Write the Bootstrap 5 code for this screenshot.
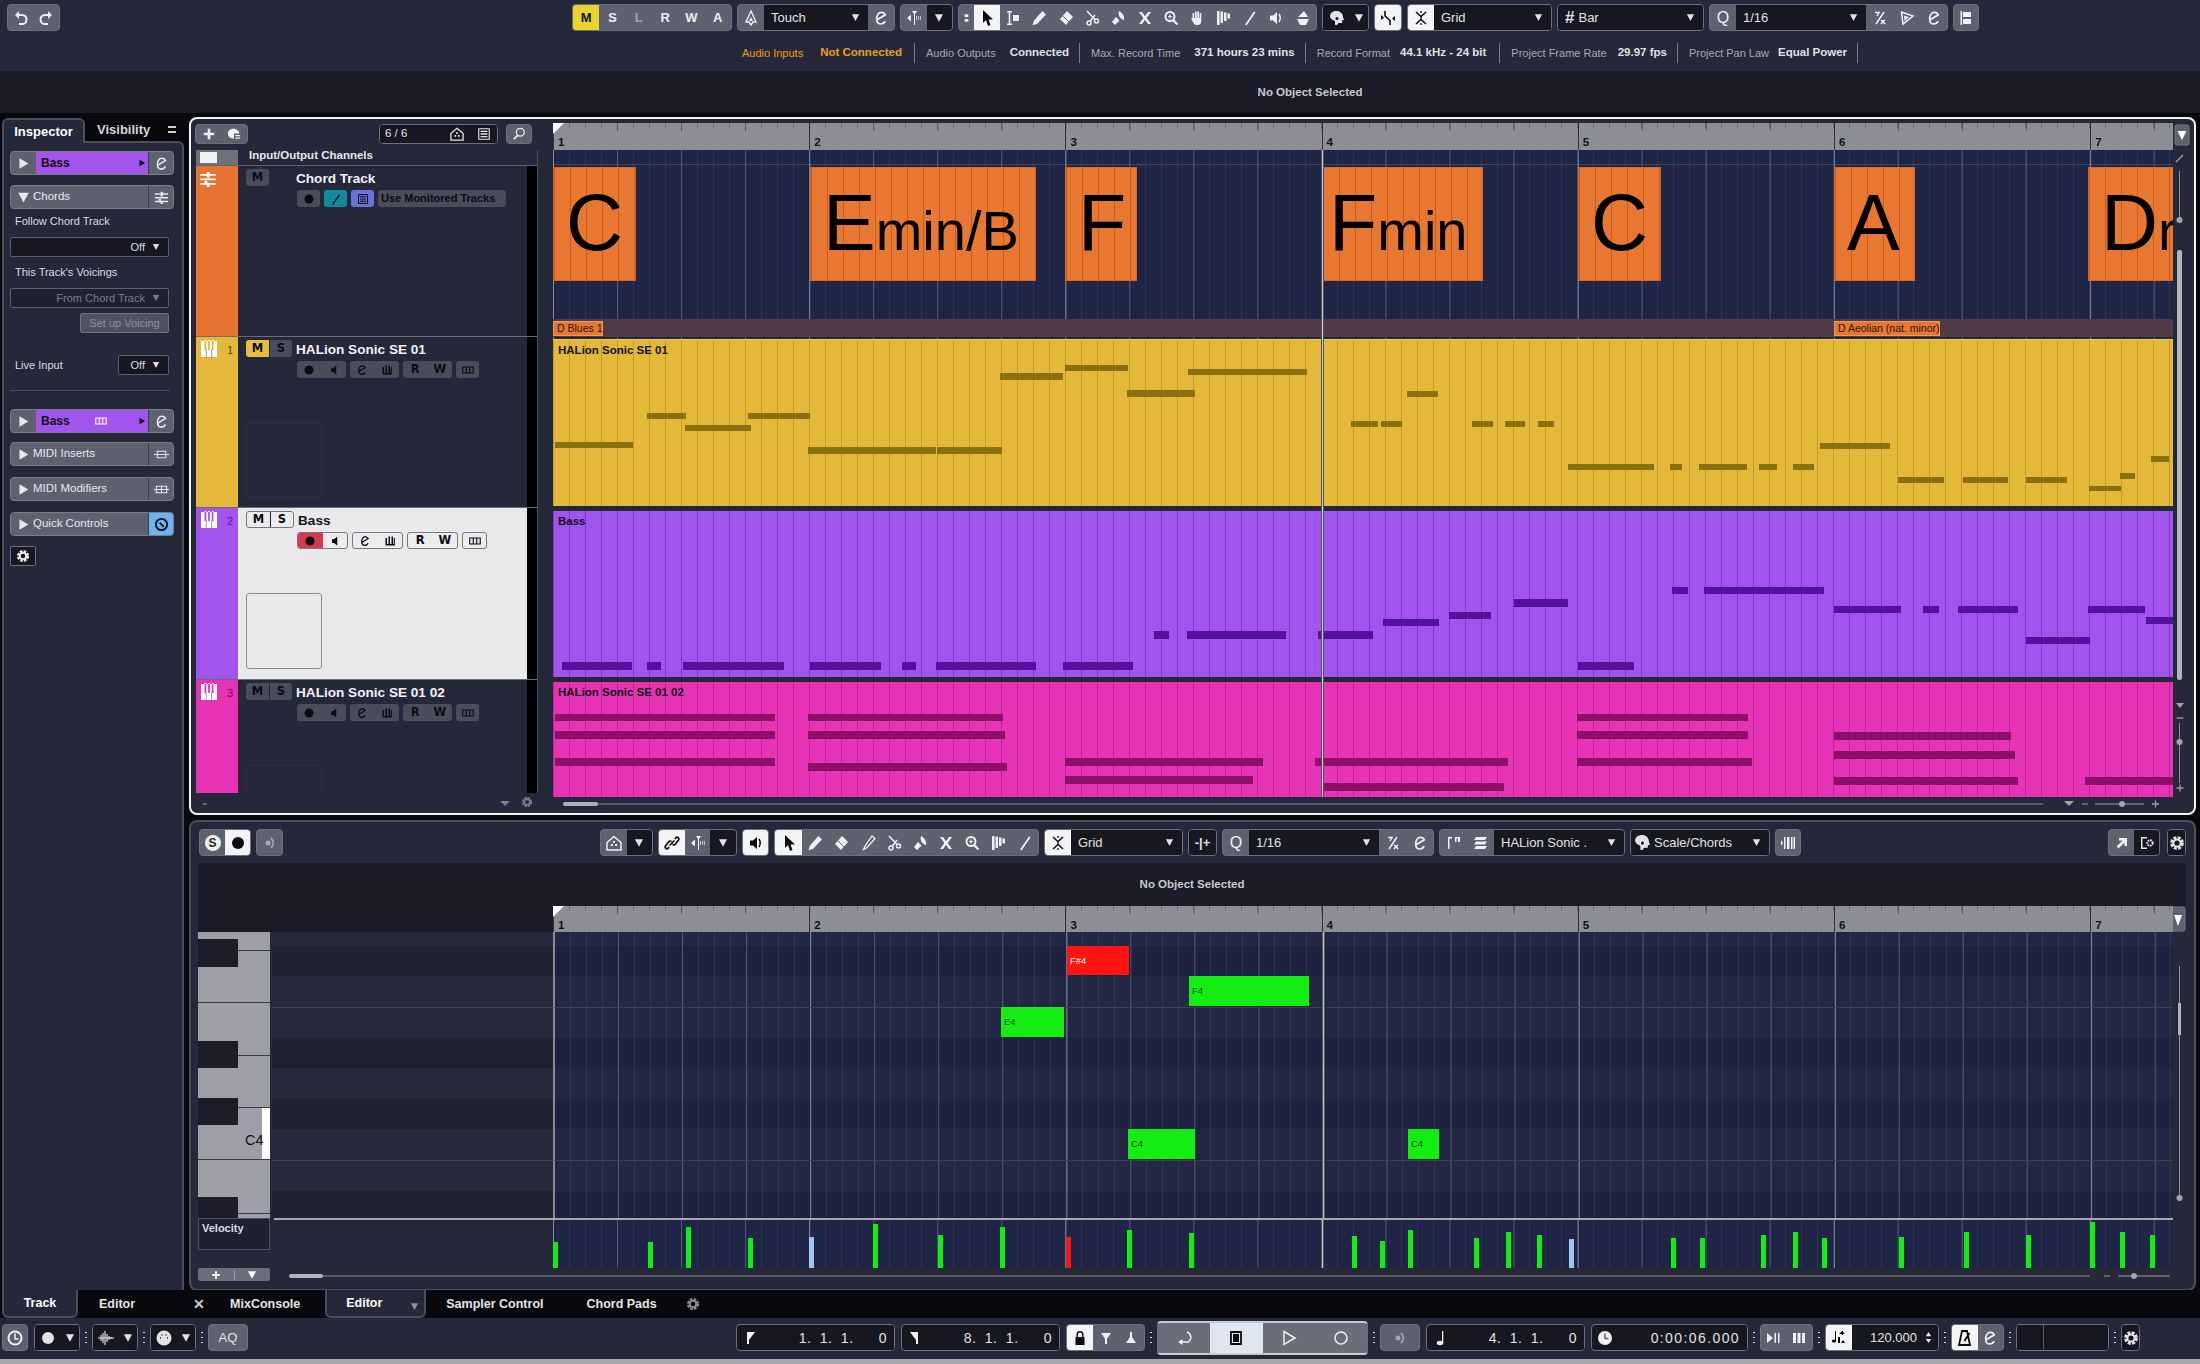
<!DOCTYPE html>
<html lang="en">
<head>
<meta charset="UTF-8">
<title>Cubase Project</title>
<link rel="stylesheet" href="https://cdn.jsdelivr.net/npm/bootstrap@5.3.0/dist/css/bootstrap.min.css">
<style>
:root { --panel:#252839; --dark:#16171f; --info:#1a1b27; --seg:#5e616e; --edge:#6d6f7b; --navy:#1f2645; }
html, body { margin:0; width:2200px; height:1364px; overflow:hidden; }
body { background:#08080d; color:#dcdce0; font-family:"Liberation Sans",Arial,sans-serif; font-size:12px; line-height:1; display:flex; flex-direction:column; }

/* widths of toolbar groups */
.wd19 { width:19px; } .wd26 { width:26px; } .wd27 { width:27px; } .wd28 { width:28px; } .wd29 { width:29px; } .wd40 { width:40px; } .wd46 { width:46px; } .wd47 { width:47px; }
.wd52 { width:52px; } .wd53 { width:53px; } .wd79 { width:79px; } .wd93 { width:93px; } .wd114 { width:114px; } .wd119 { width:119px; } .wd139 { width:139px; } .wd140 { width:140px; }
.wd145 { width:145px; } .wd147 { width:147px; } .wd157 { width:157px; } .wd158 { width:158px; } .wd159 { width:159px; } .wd160 { width:160px; } .wd186 { width:186px; } .wd211 { width:211px; }
.wd212 { width:212px; } .wd239 { width:239px; } .wd265 { width:265px; } .wd359 { width:359px; }
.w14 { width:15px; } .w18 { width:18px; } .w26 { width:26px; } .w27 { width:27px; }

/* toolbars */
.top-zone { height:71px; background:var(--panel); flex:none; }
.tbar { height:35px; padding:4px 0 0 7px; gap:5px; }
.sg { height:27px; border:1px solid var(--edge); border-radius:4px; overflow:hidden; display:flex; flex:none; background:var(--seg); color:#f1f1f4; }
.sg > span { display:flex; align-items:center; justify-content:center; flex:none; height:100%; }
.sg svg { width:16px; height:16px; }
.sg .fx { flex:1 1 0; min-width:0; }
.sg .sw { background:#f4f4f6; color:#0c0c10; }
.sg .sl { background:#dfe6f0; color:#0c0c10; }
.sg .sk { background:var(--dark); color:#e3e3e7; }
.sg .txt { justify-content:flex-start; padding-left:7px; font-size:13px; }
.sg .txt svg { width:9px; height:9px; margin-left:auto; margin-right:8px; }
.sg.blank { background:var(--dark); }
.sg .bold { font-weight:700; font-size:13px; }
.sg .dim { opacity:.45; }
.sg svg.tiny { width:10px; height:10px; }
.sg .bgy { background:#e8d62f; color:#111; }
.dimmed { color:#a5a6ad; }
.ms-tb { margin-left:507px; }
.hash { font-weight:700; font-size:17px; margin-right:4px; }
.sg .qq { font-size:16px; font-weight:400; }
.status { height:36px; padding-left:742px; display:flex; align-items:center; font-size:11px; color:#a9aab2; }
.status b { color:#e0e0e4; font-size:11.5px; margin-left:14px; }
.status i { display:block; width:1px; height:20px; background:#777a86; margin:0 11px 0 10px; }
.status .warn { color:#e9a01b; }
.status b.st-nc { margin-left:17px; }
.status i.st-s1 { margin-left:12px; }
.status b.st-fmt { margin-left:10px; }
.status i.st-s2 { margin-left:13px; }
.status b.st-fps { margin-left:11px; }
.status b.st-pan { margin-left:9px; }
.infobar { height:42px; background:var(--info); flex:none; display:flex; align-items:center; justify-content:center; padding:1px 0 0 420px; font-weight:700; font-size:11.5px; color:#c9c9cf; }
.work { height:1177px; flex:none; display:flex; padding-top:4px; }

/* inspector */
.insp { width:182px; margin-left:2px; margin-right:5px; flex:none; display:flex; flex-direction:column; }
.insp-tabs { height:24px; display:flex; align-items:center; font-size:13px; font-weight:700; flex:none; }
.insp-on { width:83px; height:25px; margin-bottom:-2px; position:relative; z-index:1; background:var(--panel); border:2px solid #4b4e5b; border-bottom:0; border-radius:6px 6px 0 0; display:flex; align-items:center; justify-content:center; color:#fff; }
.insp-off { margin-left:12px; color:#d5d5da; font-weight:700; }
.insp-menu { margin-left:auto; margin-right:8px; width:8px; height:7px; border-top:2px solid #ccc; border-bottom:2px solid #ccc; }
.insp-body { flex:1; background:var(--panel); border:2px solid #4b4e5b; border-bottom:0; border-radius:0 6px 0 0; padding:0 8px 0 6px; font-size:11px; }
.irow { height:24px; margin-top:10px; border:1px solid #7a7c88; border-radius:4px; background:var(--seg); display:flex; align-items:center; overflow:hidden; font-size:11.5px; color:#e8e8ec; }
.irow.first { margin-top:8px; }
.irow svg { width:13px; height:13px; flex:none; }
.irow .tr { width:25px; display:flex; justify-content:center; flex:none; }
.irow .pu { flex:1; height:100%; background:#a155ec; color:#111; font-weight:700; font-size:12px; display:flex; align-items:center; padding-left:5px; }
.irow .pu svg { width:8px; height:8px; margin-left:auto; margin-right:2px; }
.irow .pu svg.keys { width:12px; height:12px; margin-right:5px; color:#fff; }
.irow .lb { flex:1; margin-left:-3px; }
.irow .en { width:25px; height:100%; border-left:1px solid #3a3c47; display:flex; align-items:center; justify-content:center; flex:none; }
.irow .en svg { width:15px; height:15px; }
.irow .en.qc { background:#6cb4f2; color:#0a0a10; }
.ilbl { display:flex; align-items:center; padding-left:5px; }
.il1 { height:24px; margin-bottom:4px; }
.il2 { height:31px; }
.isel { height:20px; width:159px; border:1px solid #5d5f6b; border-radius:2px; background:var(--dark); display:flex; align-items:center; justify-content:flex-end; padding-right:8px; gap:7px; }
.isel svg { width:8px; height:8px; }
.isel.off { color:#7b7d88; background:#1f2130; }
.isetup { height:20px; width:89px; margin:5px 0 0 70px; background:#50535f; border:1px solid #70727e; border-radius:2px; color:#8e909a; display:flex; align-items:center; justify-content:center; }
.ilive { display:flex; align-items:center; justify-content:space-between; margin-top:22px; padding:0 5px 0 5px; }
.ilive .isel { width:51px; }
.isep { height:1px; margin:15px 4px 0 0; background:#4a4c58; }
.igear { width:26px; height:20px; margin-top:10px; background:var(--dark); border:1px solid #6d6f7b; border-radius:2px; display:flex; align-items:center; justify-content:center; }
.igear svg { width:14px; height:14px; color:#f0f0f0; }
.mt18 { margin-top:18px; } .mt9 { margin-top:9px; } .mt11 { margin-top:11px; }

/* panes */
.right-col { width:2007px; flex:none; display:flex; flex-direction:column; }
.pane-prj { height:698px; flex:none; background:var(--panel); border:2px solid #f4f4f6; border-radius:8px; }
.pane-ed { height:471px; margin-top:5px; flex:none; background:var(--panel); border:2px solid #4b4e5b; border-radius:8px; }
.prj-top { height:678px; display:flex; }
.tlist { width:362px; flex:none; overflow:hidden; }
.tl-bar { height:31px; padding:5px 0 0 4px; display:flex; }
.tl-bar .sg { height:20px; }
.tl-bar .sg svg { width:14px; height:14px; }
.ms-66 { margin-left:131px; } .ms-8 { margin-left:8px; } .ms-7 { margin-left:7px; }
.sg .t66 { font-size:11.5px; padding-left:5px; }
.tl-hd { height:16px; margin-left:5px; width:342px; border-bottom:1px solid #5f6270; border-right:1px solid #4a4d5a; display:flex; font-weight:700; font-size:11.5px; color:#e6e6ea; }
.tl-hd .box { width:42px; height:15px; background:#6f7078; display:flex; align-items:center; padding-left:4px; margin-right:11px; }
.tl-hd .box::before { content:""; width:17px; height:11px; background:#f2f2f4; }
.trk { margin-left:5px; width:342px; display:flex; border-bottom:1px solid #6a6d78; border-right:1px solid #4a4d5a; overflow:hidden; }
.h171 { height:171px; } .h172 { height:172px; } .h113 { height:113px; border-bottom:0; }
.strip { width:42px; flex:none; padding:3px 0 0 4px; display:flex; justify-content:space-between; font-size:10.5px; color:#5c3a10; }
.strip svg { width:18px; height:18px; color:#fff; }
.strip span { margin:5px 5px 0 0; }
.so { background:#e77431; padding:4px 0 0 3px; } .sy { background:#e4b839; } .sp { background:#a155ec; color:#4a1a8a; } .sk3 { background:#e733b5; color:#6a0f52; }
.tbody { width:289px; flex:none; padding:3px 0 0 8px; }
.tgap { width:10px; flex:none; background:#000; }
.tbody.sel { background:#e9e9eb; color:#111; }
.l1 { display:flex; align-items:center; height:17px; }
.tname { margin-left:4px; margin-top:2px; font-size:13.6px; font-weight:700; color:#f2f2f5; }
.sel .tname { color:#151519; }
.ct { margin-left:27px; }
.l2 { display:flex; gap:4px; height:17px; margin:4px 0 0 51px; }
.bg { display:flex; height:17px; border-radius:3px; background:#4a4d59; overflow:hidden; color:#0b0b10; font-family:"DejaVu Sans",sans-serif; font-weight:700; font-size:11.5px; }
.bg > span { width:23px; display:flex; align-items:center; justify-content:center; }
.bg svg { width:12px; height:12px; }
.bg.ms > span + span { border-left:1px solid #23252f; }
.bg.ms .yl { background:#e7bd3e; }
.sel .bg { background:#ececee; border:1px solid #77777e; }
.sel .bg span { height:15px; }
.sel .bg .rd { background:#d43a4d; }
.bg.wd span { width:24.5px; }
.bg.one span { width:23px; }
.bg.tl { background:#12899c; } .bg.bl { background:#6a72d8; }
.bg.umt { font-family:"Liberation Sans",sans-serif; font-size:11px; width:128px; }
.bg.umt span { width:100%; justify-content:flex-start; padding-left:3px; }
.mini { width:76px; height:76px; margin-top:44px; border:1px solid #2c2f3d; border-radius:3px; }
.sel .mini { border-color:#8b8b91; }

/* arrange */
.mid { width:1620px; flex:none; padding-top:4px; }
.ruler { height:27px; display:flex; overflow:hidden; position:relative; background-color:#8e8f96;
  background-image:linear-gradient(90deg,#55565c 1px,transparent 1px),linear-gradient(90deg,#6c6d74 1px,transparent 1px);
  background-size:64.05px 8px,16.01px 5px; background-repeat:repeat-x; color:#111; font-weight:700; font-size:11.5px; }
.ruler::before { content:""; position:absolute; left:0; top:0; width:11px; height:11px; background:#fff; clip-path:polygon(0 0,100% 0,0 100%); }
.ruler.sm { height:26px; }
.barcell { width:256.2px; flex:none; border-left:1px solid #303138; padding:14px 0 0 4px; }
.canvas { position:relative; height:647px; overflow:hidden; }
.gl { background-color:var(--navy);
  background-image:linear-gradient(90deg,rgba(255,255,255,.3) 1px,transparent 1px),linear-gradient(90deg,rgba(255,255,255,.18) 1px,transparent 1px),linear-gradient(90deg,rgba(255,255,255,.07) 1px,transparent 1px);
  background-size:256.2px 100%,64.05px 100%,16.01px 100%; }
.clane { height:189px; }
.lane { background-image:linear-gradient(90deg,var(--ln) 1px,transparent 1px); background-size:16.01px 100%; color:#111; font-weight:700; font-size:11.5px; padding:5px 0 0 5px; }
.l-y { --ln:#c49b22; background-color:#e4b839; height:167px; border-top:1px solid #f0cd58; margin-bottom:5px; }
.l-p { --ln:#7f33dd; background-color:#a155ec; height:166px; margin-bottom:5px; }
.l-k { --ln:#bb22a0; background-color:#e733b5; height:115px; }
.evt { position:absolute; background-color:#e87732; border:1px solid #d46a25; color:#000; overflow:hidden; white-space:nowrap;
  background-image:linear-gradient(90deg,#c95e1c 1px,transparent 1px); background-size:16.01px 100%; font-size:79px; line-height:110px; padding-left:12px; }
.evt small { font-size:56px; }
.evt span { margin-left:-6px; }
.scrow { position:absolute; left:0; right:0; top:169px; height:18px; background:#4f3a45; }
.sca { position:absolute; top:171px; height:15px; background:#e87732; border:1px solid #f09a55; color:#2a1204; font-size:10.5px; line-height:13px; padding-left:3px; white-space:nowrap; }
.note { position:absolute; }
.phead { position:absolute; top:0; bottom:0; left:768px; width:3px; background:#c4c5cb; border-left:1px solid #55565e; border-right:1px solid #55565e; z-index:2; }
.hline { position:absolute; left:0; right:0; top:14px; height:1px; background:rgba(255,255,255,.14); }
.vstrip { width:21px; flex:none; }
.vstrip svg { display:block; }
.bstrip { display:block; }
.bstrip .gr { color:#7c7e88; }

/* editor */
.etbar { height:27px; margin:7px 0 0 8px; display:flex; gap:5px; }
.etbar .far { margin-left:auto; margin-right:8px; display:flex; }
.ms-tool1 { margin-right:312px; }
.swbtn { width:16px; height:16px; border-radius:50%; background:#f2f2f4; color:#222; display:flex; align-items:center; justify-content:center; font-weight:700; font-size:12px; }
.sg .pm { font-size:13px; font-weight:700; }
.sg .sc { padding-left:3px; }
.sg .sc svg.hd { width:17px; height:17px; margin:0 3px 0 0; }
.ed-info { height:43px; margin:7px 8px 0 7px; background:var(--info); display:flex; align-items:center; justify-content:center; font-weight:700; font-size:11.5px; color:#c9c9cf; }
.ed-main { height:312px; display:flex; margin-left:7px; }
.ed-left { width:355px; flex:none; }
.ed-corner { height:26px; background:var(--info); }
.ed-rows { display:flex; height:286px; }
.piano { width:72px; height:286px; position:relative; background:#9e9fa6; flex:none; overflow:hidden; margin-right:2px; }
.bk { position:absolute; left:0; width:40px; background:#1c1d28; }
.ws { position:absolute; right:0; height:1px; background:#3a3b44; }
.c4 { position:absolute; left:47px; top:201px; font-size:14.5px; color:#111; }
.c4b { position:absolute; right:0; top:176px; width:8px; height:51px; background:#fff; }
.lrows { flex:1; display:flex; flex-direction:column; }
.rw { flex:none; }
.rw.a { background-color:#272a3b; } .rw.b { background-color:#20232f; }
.rw.ln { box-shadow:inset 0 1px #3c3f4e; }
.ed-mid { width:1620px; flex:none; }
.egrid { position:relative; height:286px; overflow:hidden; display:flex; flex-direction:column; border-left:1px solid #8b8d96; }
.egrid .rw.a { background-color:#222843; } .egrid .rw.b { background-color:#1d2240; }
.pn { position:absolute; font-size:9.5px; padding:10px 0 0 3px; color:#1a4a12; }
.pn.g { background:#12ee12; } .pn.r { background:#ff1414; color:#fff; }
.ed-vel { height:50px; display:flex; margin-left:7px; }
.vbox { width:72px; height:32px; border:1px solid #4e5160; font-weight:700; font-size:11px; color:#dedee2; padding:4px 0 0 3px; background:#1f2130; flex:none; }
.vrule { height:2px; background:#a8a9b0; width:1899px; position:absolute; left:76px; top:0; z-index:3; }
.vtop { position:relative; display:flex; width:1975px; }
.vspacer { width:283px; flex:none; }
.vlane { position:relative; width:1620px; height:50px; flex:none; overflow:hidden; }
.vb { position:absolute; bottom:0; width:5px; background:#12ee12; }
.vb.u { background:#9fc5ee; } .vb.r { background:#ff1414; }
.ed-foot { display:flex; margin-left:7px; align-items:flex-start; height:16px; }
.addg { height:13px; width:72px; flex:none; background:#6c6e79; border-radius:2px; display:flex; color:#fff; align-items:center; }
.addg span { flex:1; display:flex; justify-content:center; }
.addg span + span { border-left:1px solid #999; }
.addg svg { width:10px; height:10px; }

/* bottom */
.tabs { height:28px; flex:none; display:flex; align-items:center; background:#08080d; font-weight:700; font-size:12.5px; color:#e4e4e8; }
.tabon { height:100%; background:var(--panel); border:2px solid #4b4e5b; border-top:0; border-radius:0 0 6px 6px; display:flex; align-items:center; justify-content:center; }
.tb-track { width:76px; margin-left:2px; margin-right:21px; color:#fff; }
.tb-ed2 { width:101px; position:relative; justify-content:flex-start; padding-left:19px; color:#fff; margin-right:20px; }
.tb-ed2 svg { position:absolute; right:5px; top:12px; width:9px; height:9px; color:#8e909a; }
.tx-x { margin-left:58px; margin-right:25px; color:#ccc; font-size:14px; }
.tx-mc { margin-right:25px; }
.tx-sc { margin-right:43px; }
.tx-gear { margin-left:29px; width:14px; height:14px; color:#8e909a; }
.transport { height:41px; flex:none; background:var(--panel); display:flex; padding:6px 0 0 2px; gap:6px; }
.vd { width:2px; height:14px; margin:6px -1px 0; background:radial-gradient(circle,#d8d8dc 1px,transparent 1px) 0 0/2px 5px; flex:none; }
.sg .tc { flex:1 1 0; justify-content:flex-end; padding-right:7px; font-size:14px; letter-spacing:.5px; word-spacing:4px; }
.sg .tm { letter-spacing:1.4px; }
.ms-tr { margin-left:482px; }
.sg.big { height:34px; margin-top:-3px; border-top:2px solid #c9cad0; border-bottom:2px solid #c9cad0; background:#6b6d78; }
.bleed { height:5px; flex:none; background:#a8a9ae; }
.aq { font-size:13px; color:#e2e2e6; }
.sg .tp { padding-right:4px; gap:6px; font-size:13px; letter-spacing:0; }
.sg .tp svg { width:11px; height:15px; }
.bd-r { border-right:1px solid #555864; }
</style>
</head>
<body>

<svg class="d-none" xmlns="http://www.w3.org/2000/svg">
  <symbol id="undo" viewBox="0 0 16 16"><path d="M6 1 2 5l4 4V6h3a3.5 3.5 0 0 1 0 7H6v2h3a5.5 5.5 0 0 0 0-11H6z" fill="currentColor"/></symbol>
  <symbol id="redo" viewBox="0 0 16 16"><path d="M10 1l4 4-4 4V6H7a3.5 3.5 0 0 0 0 7h3v2H7A5.5 5.5 0 0 1 7 4h3z" fill="currentColor"/></symbol>
  <symbol id="auto" viewBox="0 0 16 16"><path d="M8 1 3 12h3l2 3 2-3h3z" fill="none" stroke="currentColor" stroke-width="1.4"/><path d="M8 7 10 11H6z" fill="currentColor"/></symbol>
  <symbol id="e" viewBox="0 0 16 16"><path d="M3.7 10 12.3 4.8A4.2 4.2 0 0 0 5 4.2C2.6 7.4 3.2 14 7.6 14c2.2 0 3.6-1 4.6-2.8" fill="none" stroke="currentColor" stroke-width="1.7"/></symbol>
  <symbol id="autos" viewBox="0 0 16 16"><path d="M6 1h5L9 4v11H8V4z M1 8l4-3.5v7z" fill="currentColor"/><path d="M10.5 6v4M12.5 6v4M14.5 6v4" stroke="currentColor" opacity=".7"/></symbol>
  <symbol id="vdots" viewBox="0 0 16 16"><path d="M6 4h4v3H6zM6 9h4v3H6z" fill="currentColor"/></symbol>
  <symbol id="arrow" viewBox="0 0 16 16"><path d="M4 0v13l3-3 2 6 2.5-1-2-5.500H14z" fill="currentColor"/></symbol>
  <symbol id="range" viewBox="0 0 16 16"><path d="M2 1h5v1.500H5.300v11H7V15H2v-1.500h1.700v-11H2zM8 5h6v6H8z" fill="currentColor"/></symbol>
  <symbol id="pencil" viewBox="0 0 16 16"><path d="M11.500 1 15 4.500 6 14l-4.500 1.200L3 10.500z" fill="currentColor"/></symbol>
  <symbol id="eraser" viewBox="0 0 16 16"><path d="M9 1l6 6-7 8-6-6z" fill="currentColor"/><path d="M5 6l6 6" stroke="#5e616e"/></symbol>
  <symbol id="brush" viewBox="0 0 16 16"><path d="M12 1l3 2.500-8 9-3.500 2L5 11z" fill="none" stroke="currentColor" stroke-width="1.300"/></symbol>
  <symbol id="scis" viewBox="0 0 16 16"><circle cx="12.500" cy="11" r="2" fill="none" stroke="currentColor" stroke-width="1.500"/><circle cx="5" cy="13" r="2" fill="none" stroke="currentColor" stroke-width="1.500"/><path d="M3 1l8 8.500M11 5 6 11.500" stroke="currentColor" stroke-width="1.500"/></symbol>
  <symbol id="glue" viewBox="0 0 16 16"><path d="M9 1c3 1.500 6 5 5 9-3-.5-6.500-4-5-9zM6 7l3.500 3.500L5 15l-3-3z" fill="currentColor"/></symbol>
  <symbol id="xx" viewBox="0 0 16 16"><path d="M2 2h3l3 4.200L11 2h3L9.600 8 14 14h-3L8 9.800 5 14H2l4.400-6z" fill="currentColor"/></symbol>
  <symbol id="zoom" viewBox="0 0 16 16"><circle cx="7" cy="6.500" r="4.500" fill="none" stroke="currentColor" stroke-width="2"/><path d="M10 10l4.500 4.500" stroke="currentColor" stroke-width="2.400"/><path d="M5 6.500h4M7 4.500v4" stroke="currentColor" stroke-width="1.200"/></symbol>
  <symbol id="hand" viewBox="0 0 16 16"><path d="M3.500 3h1.700v5H6V1.500h1.700V8h.6V1.500H10V8h.6V3h1.700v8c0 2.500-1.500 4-3.500 4H7.500c-1.500 0-2.500-1-3-2L2 8.500 3.500 8z" fill="currentColor"/></symbol>
  <symbol id="comb" viewBox="0 0 16 16"><path d="M1 1h2.500v14H1zM4.500 1.500H7V13H4.500zM8 2.500h2.500V11H8zM11.500 3.500H14V8.500h-2.500z" fill="currentColor"/></symbol>
  <symbol id="line" viewBox="0 0 16 16"><path d="M3 14.500 12 1.500l1.500 1L4.500 15.500z" fill="currentColor"/></symbol>
  <symbol id="spk" viewBox="0 0 16 16"><path d="M2 5.500h3L9 2v12l-4-3.500H2z" fill="currentColor"/><path d="M11 4c1.500 2.500 1.500 5.500 0 8" fill="none" stroke="currentColor" stroke-width="1.500"/></symbol>
  <symbol id="warp" viewBox="0 0 16 16"><path d="M9 1l4 6H3zM2 9h12l-3 6H5z" fill="currentColor"/></symbol>
  <symbol id="head" viewBox="0 0 16 16"><path d="M7.500 1C11 1 14 3.500 14 7l1 3-2 .5V13H9.500L8 15H6V11C3 10 1 8 1 6c0-3 3-5 6.500-5z" fill="currentColor"/><circle cx="8" cy="8.500" r="1.500" fill="#16171f"/></symbol>
  <symbol id="snap" viewBox="0 0 16 16"><path d="M5 1v5l5 4.500V15" fill="none" stroke="currentColor" stroke-width="1.600"/><path d="M1 5l3 2.500L1 10zM15 6l-3 2.500L15 11z" fill="currentColor"/></symbol>
  <symbol id="gsnap" viewBox="0 0 16 16"><path d="M3 2 8 6.500 13 2M3 14 8 9.500 13 14" fill="none" stroke="currentColor" stroke-width="1.500"/><path d="M8 1v2M8 13v2M8 7v2" stroke="currentColor" stroke-width="1.300"/></symbol>
  <symbol id="qs" viewBox="0 0 16 16"><path d="M3 2.500h4L5 6M12 2 4 14M9 10l2 1.500L9 14M13 10l-2 1.500 2 2.500" fill="none" stroke="currentColor" stroke-width="1.500"/></symbol>
  <symbol id="iq" viewBox="0 0 16 16"><path d="M2.500 2 14 6 4 14z" fill="none" stroke="currentColor" stroke-width="1.500"/><path d="M5 5.500 10 7 5.500 11z" fill="currentColor"/></symbol>
  <symbol id="align" viewBox="0 0 16 16"><path d="M2.500 1H4v14H2.500zM5 2h8v5H5zM5 9h8v5H5z" fill="currentColor"/></symbol>
  <symbol id="home" viewBox="0 0 16 16"><path d="M8 1.500 15 7.500V15H1V7.500z" fill="none" stroke="currentColor" stroke-width="1.500"/><path d="M7 6h2v2H7zM5 9h2v2H5zM9 9h2v2H9z" fill="currentColor"/></symbol>
  <symbol id="list" viewBox="0 0 16 16"><path d="M2 2h12v12H2z" fill="none" stroke="currentColor" stroke-width="1.300"/><path d="M4 5h8M4 8h8M4 11h8" stroke="currentColor" stroke-width="1.500"/></symbol>
  <symbol id="find" viewBox="0 0 16 16"><circle cx="9.500" cy="6" r="4.500" fill="none" stroke="currentColor" stroke-width="1.400"/><path d="M6.500 9.500 2 14" stroke="currentColor" stroke-width="2"/></symbol>
  <symbol id="plus" viewBox="0 0 16 16"><path d="M6.500 2h3v4.500H14v3H9.500V14h-3V9.500H2v-3h4.500z" fill="currentColor"/></symbol>
  <symbol id="addt" viewBox="0 0 16 16"><path d="M7 2C3.500 2 1 4.500 1 7.500S3.500 13 6.500 13H8V7.500h6C14 4.500 11 2 7 2zM9.500 9H15v1.500H9.500zM9.500 12H15v1.500H9.500z" fill="currentColor"/></symbol>
  <symbol id="tr" viewBox="0 0 16 16"><path d="M3 1.500 14 8 3 14.500z" fill="currentColor"/></symbol>
  <symbol id="td" viewBox="0 0 16 16"><path d="M1.500 2h13L8 14z" fill="currentColor"/></symbol>
  <symbol id="rec" viewBox="0 0 16 16"><circle cx="8" cy="8" r="6" fill="currentColor"/></symbol>
  <symbol id="mon" viewBox="0 0 16 16"><path d="M11 2v12L6.500 10.500H4v-5h2.500z" fill="currentColor"/></symbol>
  <symbol id="pkeys" viewBox="0 0 18 18"><path fill-rule="evenodd" d="M1 1h16v16H1zM4.500 0h1.800v10H4.500zM8.100 0h1.800v10H8.100zM11.700 0h1.800v10h-1.800z" fill="currentColor"/><path d="M6.300 9.500V18M11.700 9.500V18" stroke="#555" stroke-width=".6"/></symbol>
  <symbol id="mpiano" viewBox="0 0 16 16"><path d="M2 4h2v8H2zM6 2h2v10H6zM10 2h2v10h-2zM13 4h1.500v8H13zM2 12h12.500v2H2z" fill="currentColor"/></symbol>
  <symbol id="wide" viewBox="0 0 16 16"><path d="M1 4h14v8H1z" fill="none" stroke="currentColor" stroke-width="1.500"/><path d="M5.700 4v8M10.300 4v8" stroke="currentColor" stroke-width="1.500"/></symbol>
  <symbol id="gear" viewBox="0 0 16 16"><circle cx="8" cy="8" r="5.500" fill="none" stroke="currentColor" stroke-width="2.800" stroke-dasharray="3 1.320"/><circle cx="8" cy="8" r="3.600" fill="none" stroke="currentColor" stroke-width="2"/></symbol>
  <symbol id="sliders" viewBox="0 0 16 16"><path d="M1 3.500h14v1.500H1zM1 7.500h14V9H1zM1 11.500h14V13H1z" fill="currentColor"/><path d="M7 1.800h2.500v5H7zM5 9.500h2.500V13H5zM7 12h2.500v3H7z" fill="currentColor"/></symbol>
  <symbol id="ins" viewBox="0 0 16 16"><path d="M0 8h3.500M12.500 8H16M3.500 4.500h9v7h-9zM3.500 8h9" fill="none" stroke="currentColor" stroke-width="1.200"/></symbol>
  <symbol id="mods" viewBox="0 0 16 16"><path d="M0 8h16M2.500 4.500h11v7h-11zM8 4.500v7" fill="none" stroke="currentColor" stroke-width="1.200"/></symbol>
  <symbol id="knob" viewBox="0 0 16 16"><circle cx="8" cy="8" r="6" fill="none" stroke="currentColor" stroke-width="2"/><path d="M6 6l4.500 4.500" stroke="currentColor" stroke-width="1.800"/></symbol>
  <symbol id="chn" viewBox="0 0 16 16"><path d="M5 12l-1 1.500c-2 1-3.500-1-2.500-2.500l3-4c1-1.200 2-1 3-.5M11 4l1-1.500c2-1 3.500 1 2.500 2.500l-3 4c-1 1.200-2 1-3 .5M5.500 10.500l5-5" fill="none" stroke="currentColor" stroke-width="1.700"/></symbol>
  <symbol id="echo" viewBox="0 0 16 16"><circle cx="6" cy="8" r="2.500" fill="currentColor"/><path d="M9 3c3 3 3 7 0 10" fill="none" stroke="currentColor" stroke-width="1.800"/></symbol>
  <symbol id="plr" viewBox="0 0 16 16"><path d="M2 2h4v1.500H3.500V14H2zM9 2h5v5h-2V3.500H10.500V7H9z" fill="currentColor"/></symbol>
  <symbol id="lanes" viewBox="0 0 16 16"><path d="M3 2h11l-2 3H1zM3 6.500h11l-2 3H1zM3 11h11l-2 3H1z" fill="currentColor"/></symbol>
  <symbol id="ped" viewBox="0 0 16 16"><path d="M1 5l2 3-2 3zM4 2h1.500v12H4zM7 2h2.500v12H7zM11 2h1.500v12H11zM13.500 2H15v12h-1.500z" fill="currentColor"/></symbol>
  <symbol id="jump" viewBox="0 0 16 16"><path d="M5 3h8v8h-2.500V7.500L4.500 13.500 2.500 11.500 8.500 5.500H5z" fill="currentColor"/></symbol>
  <symbol id="epan" viewBox="0 0 16 16"><path d="M2 2h6v1.500H3.500v9H8V14H2z" fill="currentColor"/><circle cx="11" cy="8" r="2.700" fill="none" stroke="currentColor" stroke-width="2" stroke-dasharray="1.700 .8"/></symbol>
  <symbol id="lock" viewBox="0 0 16 16"><path d="M3.500 7h9v8h-9z" fill="currentColor"/><path d="M5.200 7V4.500a2.800 2.800 0 0 1 5.600 0V7" fill="none" stroke="currentColor" stroke-width="1.500"/></symbol>
  <symbol id="loop" viewBox="0 0 16 16"><path d="M11 2a5.500 5.500 0 0 1 1 10H5" fill="none" stroke="currentColor" stroke-width="1.500"/><path d="M6.500 9v6L2 12z" fill="currentColor"/></symbol>
  <symbol id="stop" viewBox="0 0 16 16"><path d="M3 2h10v12H3z" fill="none" stroke="currentColor" stroke-width="1.800"/><path d="M5 4h6v8H5z" fill="currentColor"/></symbol>
  <symbol id="play" viewBox="0 0 16 16"><path d="M3 1.500 14 8 3 14.500z" fill="none" stroke="currentColor" stroke-width="1.500"/></symbol>
  <symbol id="ring" viewBox="0 0 16 16"><circle cx="8" cy="8" r="6" fill="none" stroke="currentColor" stroke-width="1.500"/></symbol>
  <symbol id="note" viewBox="0 0 16 16"><path d="M10 1h1.300v12H10z" fill="currentColor"/><ellipse cx="8" cy="13" rx="3.200" ry="2.200" fill="currentColor"/></symbol>
  <symbol id="clock" viewBox="0 0 16 16"><circle cx="8" cy="8" r="7" fill="currentColor"/><path d="M8 3.500V8.500h3.500" fill="none" stroke="#5e616e" stroke-width="1.500"/></symbol>
  <symbol id="mkl" viewBox="0 0 16 16"><path d="M5 2h8L7 10v4H5z" fill="currentColor"/></symbol>
  <symbol id="mkr" viewBox="0 0 16 16"><path d="M3 2h8v12H9v-4z" fill="currentColor"/></symbol>
  <symbol id="pre" viewBox="0 0 16 16"><path d="M3 3h10L9 9v5H7V9z" fill="currentColor"/></symbol>
  <symbol id="post" viewBox="0 0 16 16"><path d="M3 13h10L9 7V2H7v5z" fill="currentColor"/></symbol>
  <symbol id="sngl" viewBox="0 0 16 16"><path d="M1 3l6 5-6 5zM8.500 3h1.500v10H8.500zM12 3h1.500v10H12z" fill="currentColor"/></symbol>
  <symbol id="sng2" viewBox="0 0 16 16"><path d="M2 3h3v10H2zM6.500 3h3v10h-3zM11 3h3v10h-3z" fill="currentColor"/></symbol>
  <symbol id="tmp" viewBox="0 0 16 16"><path d="M4 1h1v10H4zM11 1h1v4h-1zM10 13l2-3 2 3z" fill="currentColor"/><ellipse cx="3" cy="11" rx="2.200" ry="1.600" fill="currentColor"/><path d="M8 4l3-3 3 3zM7 7h2v6H7z" fill="currentColor"/></symbol>
  <symbol id="met" viewBox="0 0 16 16"><path d="M5 1h5l3 14H2zM7.500 11l5-8" fill="none" stroke="currentColor" stroke-width="1.800"/></symbol>
  <symbol id="ud" viewBox="0 0 16 16"><path d="M8 0l4 6H4zM8 16 4 10h8z" fill="currentColor"/></symbol>
  <symbol id="clk" viewBox="0 0 16 16"><circle cx="8" cy="8" r="6.500" fill="none" stroke="currentColor" stroke-width="2"/><path d="M8 3.500V9h3.500" fill="none" stroke="currentColor" stroke-width="1.500"/></symbol>
  <symbol id="wave" viewBox="0 0 16 16"><path d="M0 8h16M3 5v6M5 3v10M7 1v14M9 4v8M11 6v4M13 7v2" stroke="currentColor" stroke-width="1.200"/></symbol>
  <symbol id="din" viewBox="0 0 16 16"><circle cx="8" cy="8" r="7.500" fill="currentColor"/><path d="M4 8h1M11 8h1M5.500 5h1M9.500 5h1M8 3.500h.1M8 11h.1" stroke="#16171f" stroke-width="1.500"/></symbol>
</svg>

<!-- top -->
<div class="top-zone">
  <div class="tbar d-flex">
    <div class="sg wd53"><span class="fx" data-ic="undo"></span><span class="fx" data-ic="redo"></span></div>
    <div class="sg ms-tb wd160"><span class="fx bold bgy">M</span><span class="fx bold">S</span><span class="fx bold dim">L</span><span class="fx bold">R</span><span class="fx bold">W</span><span class="fx bold">A</span></div>
    <div class="sg wd158"><span data-ic="auto" class="w26"></span><span class="fx sk txt">Touch<svg><use href="#td"/></svg></span><span class="w26" data-ic="e"></span></div>
    <div class="sg wd53"><span class="fx" data-ic="autos"></span><span class="fx sk"><svg class="tiny"><use href="#td"/></svg></span></div>
    <div class="sg wd359">
      <span class="w14" data-ic="vdots"></span><span class="w26 sw" data-ic="arrow"></span>
      <span class="fx" data-ic="range"></span><span class="fx" data-ic="pencil"></span><span class="fx" data-ic="eraser"></span><span class="fx" data-ic="scis"></span><span class="fx" data-ic="glue"></span><span class="fx" data-ic="xx"></span><span class="fx" data-ic="zoom"></span><span class="fx" data-ic="hand"></span><span class="fx" data-ic="comb"></span><span class="fx" data-ic="line"></span><span class="fx" data-ic="spk"></span><span class="fx" data-ic="warp"></span>
    </div>
    <div class="sg blank wd47"><span class="fx sk" data-ic="head"></span><span class="w18 sk"><svg class="tiny"><use href="#td"/></svg></span></div>
    <div class="sg wd28"><span class="fx sw" data-ic="snap"></span></div>
    <div class="sg blank wd145"><span class="w26 sw" data-ic="gsnap"></span><span class="fx sk txt">Grid<svg><use href="#td"/></svg></span></div>
    <div class="sg blank wd147"><span class="fx sk txt"><span class="hash">#</span>Bar<svg><use href="#td"/></svg></span></div>
    <div class="sg wd239"><span class="w26 bold qq">Q</span><span class="fx sk txt">1/16<svg><use href="#td"/></svg></span><span class="w27" data-ic="qs"></span><span class="w27" data-ic="iq"></span><span class="w27" data-ic="e"></span></div>
    <div class="sg wd26"><span class="fx" data-ic="align"></span></div>
  </div>
  <div class="status">
    <span class="warn">Audio Inputs</span><b class="warn st-nc">Not Connected</b><i class="st-s1"></i>
    <span>Audio Outputs</span><b>Connected</b><i></i>
    <span>Max. Record Time</span><b>371 hours 23 mins</b><i></i>
    <span>Record Format</span><b class="st-fmt">44.1 kHz - 24 bit</b><i class="st-s2"></i>
    <span>Project Frame Rate</span><b class="st-fps">29.97 fps</b><i></i>
    <span>Project Pan Law</span><b class="st-pan">Equal Power</b><i></i>
  </div>
</div>
<div class="infobar">No Object Selected</div>

<div class="work">
  <!-- inspector -->
  <div class="insp">
    <div class="insp-tabs"><div class="insp-on">Inspector</div><div class="insp-off">Visibility</div><div class="insp-menu"></div></div>
    <div class="insp-body">
      <div class="irow first"><span class="tr" data-ic="tr"></span><span class="pu">Bass<svg><use href="#tr"/></svg></span><span class="en" data-ic="e"></span></div>
      <div class="irow"><span class="tr" data-ic="td"></span><span class="lb">Chords</span><span class="en" data-ic="sliders"></span></div>
      <div class="ilbl il1">Follow Chord Track</div>
      <div class="isel">Off<svg><use href="#td"/></svg></div>
      <div class="ilbl il2">This Track's Voicings</div>
      <div class="isel off">From Chord Track<svg><use href="#td"/></svg></div>
      <div class="isetup">Set up Voicing</div>
      <div class="ilive">Live Input<div class="isel">Off<svg><use href="#td"/></svg></div></div>
      <div class="isep"></div>
      <div class="irow mt18"><span class="tr" data-ic="tr"></span><span class="pu">Bass<svg class="keys"><use href="#wide"/></svg><svg><use href="#tr"/></svg></span><span class="en" data-ic="e"></span></div>
      <div class="irow mt9"><span class="tr" data-ic="tr"></span><span class="lb">MIDI Inserts</span><span class="en" data-ic="ins"></span></div>
      <div class="irow mt11"><span class="tr" data-ic="tr"></span><span class="lb">MIDI Modifiers</span><span class="en" data-ic="mods"></span></div>
      <div class="irow mt11"><span class="tr" data-ic="tr"></span><span class="lb">Quick Controls</span><span class="en qc" data-ic="knob"></span></div>
      <div class="igear" data-ic="gear"></div>
    </div>
  </div>

  <div class="right-col">
    <!-- project -->
    <div class="pane-prj">
      <div class="prj-top">
        <div class="tlist">
          <div class="tl-bar">
            <div class="sg wd53"><span class="fx" data-ic="plus"></span><span class="fx" data-ic="addt"></span></div>
            <div class="sg blank ms-66 wd119"><span class="fx sk txt t66">6 / 6</span><span class="w27 sk" data-ic="home"></span><span class="w27 sk" data-ic="list"></span></div>
            <div class="sg ms-8 wd26"><span class="fx" data-ic="find"></span></div>
          </div>
          <div class="tl-hd"><span class="box"></span>Input/Output Channels</div>

          <div class="trk h171">
            <div class="strip so"><svg><use href="#sliders"/></svg></div>
            <div class="tbody">
              <div class="l1"><div class="bg ms"><span>M</span></div><span class="tname ct">Chord Track</span></div>
              <div class="l2">
                <div class="bg one"><span data-ic="rec"></span></div>
                <div class="bg one tl"><span data-ic="line"></span></div>
                <div class="bg one bl"><span data-ic="list"></span></div>
                <div class="bg umt"><span>Use Monitored Tracks</span></div>
              </div>
            </div>
            <div class="tgap"></div>
          </div>

          <div class="trk h171">
            <div class="strip sy"><svg><use href="#pkeys"/></svg><span>1</span></div>
            <div class="tbody">
              <div class="l1"><div class="bg ms"><span class="yl">M</span><span>S</span></div><span class="tname">HALion Sonic SE 01</span></div>
              <div class="l2"><div class="bg wd"><span data-ic="rec"></span><span data-ic="mon"></span></div><div class="bg wd"><span data-ic="e"></span><span data-ic="mpiano"></span></div><div class="bg wd"><span>R</span><span>W</span></div><div class="bg one"><span data-ic="wide"></span></div></div>
              <div class="mini"></div>
            </div>
            <div class="tgap"></div>
          </div>

          <div class="trk h172">
            <div class="strip sp"><svg><use href="#pkeys"/></svg><span>2</span></div>
            <div class="tbody sel">
              <div class="l1"><div class="bg ms"><span>M</span><span>S</span></div><span class="tname">Bass</span></div>
              <div class="l2"><div class="bg wd"><span class="rd" data-ic="rec"></span><span data-ic="mon"></span></div><div class="bg wd"><span data-ic="e"></span><span data-ic="mpiano"></span></div><div class="bg wd"><span>R</span><span>W</span></div><div class="bg one"><span data-ic="wide"></span></div></div>
              <div class="mini"></div>
            </div>
            <div class="tgap"></div>
          </div>

          <div class="trk h113">
            <div class="strip sk3"><svg><use href="#pkeys"/></svg><span>3</span></div>
            <div class="tbody">
              <div class="l1"><div class="bg ms"><span>M</span><span>S</span></div><span class="tname">HALion Sonic SE 01 02</span></div>
              <div class="l2"><div class="bg wd"><span data-ic="rec"></span><span data-ic="mon"></span></div><div class="bg wd"><span data-ic="e"></span><span data-ic="mpiano"></span></div><div class="bg wd"><span>R</span><span>W</span></div><div class="bg one"><span data-ic="wide"></span></div></div>
              <div class="mini"></div>
            </div>
            <div class="tgap"></div>
          </div>
        </div>

        <div class="mid">
          <div class="ruler"><div class="barcell">1</div><div class="barcell">2</div><div class="barcell">3</div><div class="barcell">4</div><div class="barcell">5</div><div class="barcell">6</div><div class="barcell">7</div></div>
          <div class="canvas" id="arr">
            <div class="clane gl"></div>
            <div class="lane l-y">HALion Sonic SE 01</div>
            <div class="lane l-p">Bass</div>
            <div class="lane l-k">HALion Sonic SE 01 02</div>
            <div class="hline"></div>
            <div class="scrow"></div>
            <div class="phead"></div>
          </div>
        </div>

        <div class="vstrip">
          <svg width="21" height="678" viewBox="0 0 21 678">
            <rect x="2" y="6" width="14" height="20" rx="2" fill="#5e616e" stroke="#777a86"/><path d="M4.500 12h9L9 21z" fill="#fff"/>
            <path d="M3 43 10 36" stroke="#aaa" stroke-width="1.300"/>
            <path d="M6.500 52V100" stroke="#8d8e96"/><circle cx="6.500" cy="101" r="3" fill="#a6a7ae"/>
            <rect x="4" y="131" width="5" height="430" rx="2" fill="#b3b4bb"/>
            <path d="M3 584h8l-4 5z" fill="#9fa0a8"/>
            <path d="M3.500 599h7" stroke="#9fa0a8" stroke-width="1.300"/><path d="M6.500 604V664" stroke="#8d8e96"/><circle cx="6.500" cy="623" r="3" fill="#a6a7ae"/><path d="M3.500 669h7M7 665.500v7" stroke="#9fa0a8" stroke-width="1.300"/>
          </svg>
        </div>
      </div>
      <svg class="bstrip" width="2003" height="16" viewBox="0 0 2003 16">
        <path d="M12 7h4" stroke="#8d8e96" stroke-width="1.300"/>
        <path d="M309 4h10l-5 5z" fill="#7c7e88"/>
        <use class="gr" href="#gear" x="330" y="-1" width="12" height="12"/>
        <path d="M372 7H1852" stroke="#8d8e96"/><rect x="372" y="5" width="35" height="4" rx="2" fill="#aeafb6"/>
        <path d="M1873 4h10l-5 5z" fill="#9fa0a8"/><path d="M1891 7h6M1904 7h49" stroke="#9fa0a8"/><circle cx="1931" cy="7" r="3" fill="#a6a7ae"/><path d="M1961 7h7M1964.500 3.500v7" stroke="#9fa0a8" stroke-width="1.300"/>
      </svg>
    </div>

    <!-- editor -->
    <div class="pane-ed">
      <div class="etbar">
        <div class="sg wd52"><span class="fx"><span class="swbtn">S</span></span><span class="fx sw" data-ic="rec"></span></div>
        <div class="sg ms-tool1 dimmed wd27"><span class="fx" data-ic="echo"></span></div>
        <div class="sg wd53"><span class="fx" data-ic="home"></span><span class="fx sk"><svg class="tiny"><use href="#td"/></svg></span></div>
        <div class="sg wd79"><span class="fx sw" data-ic="chn"></span><span class="fx" data-ic="autos"></span><span class="fx sk"><svg class="tiny"><use href="#td"/></svg></span></div>
        <div class="sg wd27"><span class="fx sw" data-ic="spk"></span></div>
        <div class="sg wd265"><span class="w27 sw" data-ic="arrow"></span><span class="fx" data-ic="pencil"></span><span class="fx" data-ic="eraser"></span><span class="fx" data-ic="brush"></span><span class="fx" data-ic="scis"></span><span class="fx" data-ic="glue"></span><span class="fx" data-ic="xx"></span><span class="fx" data-ic="zoom"></span><span class="fx" data-ic="comb"></span><span class="fx" data-ic="line"></span></div>
        <div class="sg blank wd139"><span class="w26 sw" data-ic="gsnap"></span><span class="fx sk txt">Grid<svg><use href="#td"/></svg></span></div>
        <div class="sg blank wd29"><span class="fx sk pm">-|+</span></div>
        <div class="sg wd212"><span class="w26 bold qq">Q</span><span class="fx sk txt">1/16<svg><use href="#td"/></svg></span><span class="w27" data-ic="qs"></span><span class="w27" data-ic="e"></span></div>
        <div class="sg wd186"><span class="w27" data-ic="plr"></span><span class="w27" data-ic="lanes"></span><span class="fx sk txt">HALion Sonic .<svg><use href="#td"/></svg></span></div>
        <div class="sg blank wd140"><span class="fx sk txt sc"><svg class="hd"><use href="#head"/></svg>Scale/Chords<svg><use href="#td"/></svg></span></div>
        <div class="sg wd26"><span class="fx" data-ic="ped"></span></div>
        <div class="far">
          <div class="sg wd52"><span class="fx" data-ic="jump"></span><span class="fx sk" data-ic="epan"></span></div>
          <div class="sg blank ms-7 wd19"><span class="fx sk" data-ic="gear"></span></div>
        </div>
      </div>
      <div class="ed-info">No Object Selected</div>
      <div class="ed-main">
        <div class="ed-left">
          <div class="ed-corner"></div>
          <div class="ed-rows">
            <div class="piano" id="piano"><div class="c4b"></div><div class="c4">C4</div></div>
            <div class="lrows" id="lrows"></div>
          </div>
        </div>
        <div class="ed-mid">
          <div class="ruler sm"><div class="barcell">1</div><div class="barcell">2</div><div class="barcell">3</div><div class="barcell">4</div><div class="barcell">5</div><div class="barcell">6</div><div class="barcell">7</div></div>
          <div class="egrid" id="egrid"><div class="phead"></div></div>
        </div>
        <svg width="21" height="312" viewBox="0 0 21 312">
          <rect x="-2" y="1" width="14" height="24" rx="2" fill="#5e616e" stroke="#777a86"/><path d="M1 9h8L5 20z" fill="#fff"/>
          <path d="M6.500 60V290" stroke="#8d8e96"/><rect x="5" y="97" width="3" height="32" fill="#b3b4bb"/><circle cx="6.500" cy="292" r="3" fill="#a6a7ae"/>
        </svg>
      </div>
      <div class="ed-vel">
        <div class="vtop">
          <div class="vrule"></div>
          <div class="vbox">Velocity</div>
          <div class="vspacer"></div>
          <div class="vlane gl" id="vlane"><div class="phead"></div></div>
        </div>
      </div>
      <div class="ed-foot">
        <div class="addg"><span data-ic="plus"></span><span data-ic="td"></span></div>
        <svg width="1910" height="16" viewBox="0 0 1910 16">
          <path d="M19 8H1820" stroke="#8d8e96"/><rect x="19" y="6" width="34" height="4" rx="2" fill="#b3b4bb"/>
          <path d="M1834 8h6M1848 8h52" stroke="#9fa0a8"/><circle cx="1864" cy="8" r="3" fill="#a6a7ae"/>
        </svg>
      </div>
    </div>
  </div>
</div>

<!-- window tabs -->
<div class="tabs">
  <div class="tabon tb-track">Track</div><span>Editor</span><span class="tx-x">✕</span><span class="tx-mc">MixConsole</span>
  <div class="tabon tb-ed2">Editor<svg><use href="#td"/></svg></div><span class="tx-sc">Sampler Control</span><span>Chord Pads</span><svg class="tx-gear"><use href="#gear"/></svg>
</div>

<!-- transport -->
<div class="transport">
  <div class="sg wd26"><span class="fx" data-ic="clk"></span></div>
  <div class="sg blank wd46"><span class="fx sk" data-ic="rec"></span><span class="w18 sk"><svg class="tiny"><use href="#td"/></svg></span></div><div class="vd"></div>
  <div class="sg blank wd46"><span class="fx sk" data-ic="wave"></span><span class="w18 sk"><svg class="tiny"><use href="#td"/></svg></span></div><div class="vd"></div>
  <div class="sg blank wd46"><span class="fx sk" data-ic="din"></span><span class="w18 sk"><svg class="tiny"><use href="#td"/></svg></span></div><div class="vd"></div>
  <div class="sg wd40"><span class="fx aq">AQ</span></div>

  <div class="sg blank ms-tr wd159"><span class="w26" data-ic="mkl"></span><span class="sk tc">1. 1. 1.&nbsp;&nbsp;&nbsp;0</span></div>
  <div class="sg blank wd159"><span class="w26" data-ic="mkr"></span><span class="sk tc">8. 1. 1.&nbsp;&nbsp;&nbsp;0</span></div>
  <div class="sg wd79"><span class="w26 sw" data-ic="lock"></span><span class="fx" data-ic="pre"></span><span class="fx" data-ic="post"></span></div><div class="vd"></div>
  <div class="sg big wd211"><span class="fx" data-ic="loop"></span><span class="fx sl" data-ic="stop"></span><span class="fx" data-ic="play"></span><span class="fx" data-ic="ring"></span></div><div class="vd"></div>
  <div class="sg dimmed wd40"><span class="fx" data-ic="echo"></span></div>
  <div class="sg blank wd159"><span class="w26" data-ic="note"></span><span class="sk tc">4. 1. 1.&nbsp;&nbsp;&nbsp;0</span></div>
  <div class="sg blank wd157"><span class="w26" data-ic="clock"></span><span class="sk tc tm">0:00:06.000</span></div><div class="vd"></div>
  <div class="sg wd53"><span class="fx" data-ic="sngl"></span><span class="fx" data-ic="sng2"></span></div><div class="vd"></div>
  <div class="sg blank wd114"><span class="w26 sw" data-ic="tmp"></span><span class="sk tc tp">120.000<svg><use href="#ud"/></svg></span></div><div class="vd"></div>
  <div class="sg wd53"><span class="fx sw" data-ic="met"></span><span class="fx" data-ic="e"></span></div><div class="vd"></div>
  <div class="sg blank wd93"><span class="sk w27 bd-r"></span><span class="sk fx"></span></div><div class="vd"></div>
  <div class="sg blank wd19"><span class="fx sk" data-ic="gear"></span></div>
</div>
<div class="bleed"></div>

<script>
// inline icons
document.querySelectorAll('[data-ic]').forEach(function (el) {
  el.innerHTML = '<svg><use href="#' + el.dataset.ic + '"/></svg>';
});

function addBox(parent, cls, x0, x1, y0, y1, color, text) {
  var d = document.createElement('div');
  d.className = cls;
  d.style.left = x0 + 'px';
  d.style.width = (x1 - x0) + 'px';
  if (y0 !== null) { d.style.top = y0 + 'px'; d.style.height = (y1 - y0) + 'px'; }
  if (color) d.style.background = color;
  if (text) d.innerHTML = text;
  parent.appendChild(d);
  return d;
}

var OX = 553, OY = 150;
var arr = document.getElementById('arr');
var head = arr.querySelector('.phead');

// chord events
[[553,636,'C'],[810,1036,'E<small>min/B</small>'],[1065,1137,'F'],[1322,1483,'<span>F<small>min</small></span>'],[1578,1661,'C'],[1834,1915,'A'],[2088,2180,'D<small>r</small>']].forEach(function (c) {
  addBox(arr, 'evt', c[0]-OX, c[1]-OX, 17, 131, null, c[2]);
});
addBox(arr, 'sca', 0, 50, null, null, null, 'D Blues 1');
addBox(arr, 'sca', 1834-OX, 1940-OX, null, null, null, 'D Aeolian (nat. minor)');

// midi notes: x0, x1, y0, y1
var yellow = [[555,633,442,448],[647,686,413,419],[685,751,425,431],[748,810,413,419],[808,936,447,454],[937,1002,447,454],[1000,1063,373,380],[1065,1128,365,371],[1127,1195,390,397],[1188,1307,369,375],
  [1351,1378,421,427],[1381,1402,421,427],[1407,1438,391,397],[1472,1493,421,427],[1505,1525,421,427],[1538,1554,421,427],[1568,1654,464,470],[1670,1682,464,470],[1699,1747,464,470],[1759,1777,464,470],[1793,1814,464,470],[1820,1890,443,449],[1898,1944,477,483],[1963,2008,477,483],[2026,2067,477,483],[2089,2121,486,491],[2120,2135,473,479],[2151,2169,456,462]];
var purple = [[562,632,662,670],[647,661,662,670],[683,784,662,670],[810,881,662,670],[902,916,662,670],[936,1036,662,670],[1063,1133,662,670],[1154,1169,631,639],[1187,1286,631,639],[1318,1373,631,639],[1383,1439,619,626],[1449,1491,612,619],[1514,1568,599,607],[1578,1634,662,670],[1672,1688,587,594],[1704,1824,587,594],[1834,1901,606,613],[1923,1939,606,613],[1958,2018,606,613],[2026,2090,637,644],[2088,2145,606,613],[2146,2173,617,624]];
var pink = [[555,775,714,721],[808,1003,714,721],[1577,1748,714,721],[555,775,731,739],[808,1005,731,739],[1577,1748,731,739],[555,775,758,766],[808,1007,763,771],[1577,1752,758,766],[1065,1263,758,766],[1065,1253,776,784],[1315,1508,758,766],[1322,1504,783,791],[1834,2011,732,740],[1834,2015,751,759],[1834,2018,777,785],[2085,2173,777,785]];
[[yellow,'#8b7012'],[purple,'#54129c'],[pink,'#8c1068']].forEach(function (set) {
  set[0].forEach(function (n) { addBox(arr, 'note', n[0]-OX, n[1]-OX, n[2]-OY, n[3]-OY, set[1]); });
});
arr.appendChild(head);

// piano keys
var piano = document.getElementById('piano');
[[939,967],[1041,1068],[1098,1125],[1197,1218]].forEach(function (k) {
  var d = document.createElement('div');
  d.className = 'bk';
  d.style.top = (k[0]-932) + 'px';
  d.style.height = (k[1]-k[0]) + 'px';
  piano.appendChild(d);
});
[[950,32],[1002,72],[1055,32],[1107,32],[1159,72],[1213,32]].forEach(function (s) {
  var d = document.createElement('div');
  d.className = 'ws';
  d.style.top = (s[0]-932) + 'px';
  d.style.width = s[1] + 'px';
  piano.appendChild(d);
});

// key rows, left part and grid part
var rows = [[14,'a'],[30,'b'],[31,'a'],[31,'a ln'],[30,'b'],[31,'a'],[30,'b'],[31,'a'],[31,'a ln'],[27,'b']];
var lrows = document.getElementById('lrows');
var egrid = document.getElementById('egrid');
var eHead = egrid.querySelector('.phead');
rows.forEach(function (r) {
  [[lrows,'rw '],[egrid,'rw gl ']].forEach(function (p) {
    var d = document.createElement('div');
    d.className = p[1] + r[1];
    d.style.height = r[0] + 'px';
    p[0].appendChild(d);
  });
});
egrid.appendChild(eHead);

// piano roll notes
[[1066,1128,946,975,'r','F#4'],[1188,1308,976,1006,'g','F4'],[1000,1063,1007,1037,'g','E4'],[1127,1194,1129,1159,'g','C4'],[1407,1438,1129,1159,'g','C4']].forEach(function (n) {
  addBox(egrid, 'pn ' + n[4], n[0]-OX, n[1]-OX, n[2]-932, n[3]-932, null, n[5]);
});

// velocity bars: x, top y, kind
var vlane = document.getElementById('vlane');
[[553,1244],[648,1244],[686,1229],[748,1240],[809,1239,'u'],[873,1226],[938,1237],[1000,1229],[1066,1239,'r'],[1127,1232],[1189,1235],[1352,1238],[1380,1243],[1408,1232],[1474,1240],[1506,1234],[1537,1237],[1569,1241,'u'],[1671,1240],[1700,1240],[1761,1237],[1793,1234],[1822,1240],[1899,1239],[1964,1234],[2026,1237],[2090,1224],[2120,1234],[2150,1237]].forEach(function (b) {
  var d = document.createElement('div');
  d.className = 'vb' + (b[2] ? ' ' + b[2] : '');
  d.style.left = (b[0]-OX) + 'px';
  d.style.height = (1270-b[1]) + 'px';
  vlane.appendChild(d);
});
</script>
<script src="https://cdn.jsdelivr.net/npm/bootstrap@5.3.0/dist/js/bootstrap.bundle.min.js"></script>
</body>
</html>
